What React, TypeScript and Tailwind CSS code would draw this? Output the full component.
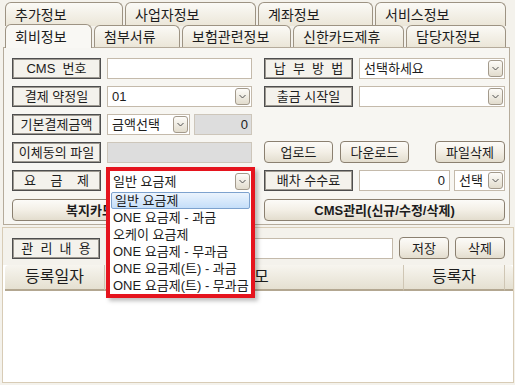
import type { ReactNode } from 'react';

const row1Tabs = [
  { label: '추가정보', w: 'w-[118px]' },
  { label: '사업자정보', w: 'w-[131px]' },
  { label: '계좌정보', w: 'w-[115px]' },
  { label: '서비스정보', w: 'w-[131px]' },
];

const row2Tabs = [
  { label: '회비정보', w: 'w-[87px]', active: true },
  { label: '첨부서류', w: 'w-[86px]' },
  { label: '보험관련정보', w: 'w-[109px]' },
  { label: '신한카드제휴', w: 'w-[111px]' },
  { label: '담당자정보', w: 'w-[100px]' },
];

const feePlans = [
  '일반 요금제',
  'ONE 요금제 - 과금',
  '오케이 요금제',
  'ONE 요금제 - 무과금',
  'ONE 요금제(트) - 과금',
  'ONE 요금제(트) - 무과금',
];

function Chevron() {
  return (
    <span className="flex h-[17px] w-[15px] shrink-0 items-center justify-center rounded-[3px] border border-[#a39a8c] bg-gradient-to-b from-[#fdfcf9] to-[#e2dccd]">
      <svg width="7" height="5" viewBox="0 0 7 5">
        <path d="M0.5 1 L3.5 4 L6.5 1" fill="none" stroke="#505050" strokeWidth="1" />
      </svg>
    </span>
  );
}

function Label({ children, w = 'w-[89px]' }: { children: ReactNode; w?: string }) {
  return (
    <div
      className={`flex h-[21px] ${w} shrink-0 items-center justify-center whitespace-pre border border-[#4e4e4e] bg-[#f4f2ec] leading-none shadow-[inset_0_0_0_1px_#9c9890]`}
    >
      {children}
    </div>
  );
}

function Select({ value, w }: { value?: string; w: string }) {
  return (
    <div className={`flex h-[21px] ${w} items-center justify-between border border-[#c4baab] bg-white pl-[4px] pr-[1px] leading-none`}>
      <span>{value}</span>
      <Chevron />
    </div>
  );
}

function Btn({ children, w, bold }: { children: ReactNode; w: string; bold?: boolean }) {
  return (
    <div
      className={`flex h-[22px] ${w} shrink-0 items-center justify-center rounded-[4px] border border-[#8b8070] bg-gradient-to-b from-[#fcfbf8] via-[#f3efe6] to-[#e3ddce] leading-none ${bold ? 'font-bold' : ''}`}
    >
      {children}
    </div>
  );
}

export default function App() {
  return (
    <div className="relative h-[385px] w-[515px] overflow-hidden bg-[#f4f2ec] font-['Liberation_Sans','Noto_Sans_CJK_KR',sans-serif] text-[13px] text-[#1c1c1c]">
      {/* Tab headers */}
      <div className="pl-[5px] pt-[2px]">
        <div className="flex h-[23px] gap-[2px]">
          {row1Tabs.map((t) => (
            <div
              key={t.label}
              className={`flex h-[24px] ${t.w} items-center rounded-t-[6px] border border-b-0 border-[#9d9383] bg-gradient-to-b from-[#fbfaf6] to-[#ebe6d8] pl-[9px] text-[14px] leading-none`}
            >
              {t.label}
            </div>
          ))}
        </div>
        <div className="relative z-10 flex h-[22px] items-end gap-[2px]">
          {row2Tabs.map((t) =>
            t.active ? (
              <div
                key={t.label}
                className={`flex h-[24px] ${t.w} items-center self-start -mt-[1px] rounded-t-[6px] border border-b-0 border-[#9d9383] bg-[#f9f8f4] pl-[9px] text-[14px] leading-none`}
              >
                {t.label}
              </div>
            ) : (
              <div
                key={t.label}
                className={`flex h-[22px] ${t.w} items-center rounded-t-[6px] border border-b-0 border-[#9d9383] bg-gradient-to-b from-[#fbfaf6] to-[#ebe6d8] pl-[9px] text-[14px] leading-none`}
              >
                {t.label}
              </div>
            )
          )}
        </div>
      </div>

      {/* 회비정보 panel */}
      <div className="ml-[3px] flex h-[178px] w-[507px] flex-col border border-[#b5ab9b] bg-[#f7f6f2] pl-[8px] pt-[10px]">
        <div className="flex h-[21px] items-center">
          <div className="flex w-[252px] gap-[6px]">
            <Label>{'CMS  번호'}</Label>
            <div className="h-[21px] w-[145px] border border-[#c4baab] bg-white" />
          </div>
          <div className="flex gap-[6px]">
            <Label>{'납  부  방  법'}</Label>
            <Select value="선택하세요" w="w-[146px]" />
          </div>
        </div>

        <div className="mt-[7px] flex h-[21px] items-center">
          <div className="flex w-[252px] gap-[6px]">
            <Label>결제 약정일</Label>
            <Select value="01" w="w-[145px]" />
          </div>
          <div className="flex gap-[6px]">
            <Label>출금 시작일</Label>
            <Select w="w-[146px]" />
          </div>
        </div>

        <div className="mt-[7px] flex h-[21px] items-center">
          <div className="flex w-[252px] gap-[4px]">
            <div className="mr-[2px]">
              <Label>기본결제금액</Label>
            </div>
            <Select value="금액선택" w="w-[83px]" />
            <div className="flex h-[21px] w-[58px] items-center justify-end border border-[#cdc6ba] bg-[#dddddd] pr-[3px] leading-none">
              0
            </div>
          </div>
        </div>

        <div className="mt-[6px] flex h-[22px] items-center">
          <div className="flex w-[252px] gap-[6px]">
            <Label>이체동의 파일</Label>
            <div className="h-[21px] w-[145px] border border-[#cdc6ba] bg-[#dddddd]" />
          </div>
          <div className="flex w-[241px] gap-[7px]">
            <Btn w="w-[69px]">업로드</Btn>
            <Btn w="w-[69px]">다운로드</Btn>
            <div className="ml-auto">
              <Btn w="w-[70px]">파일삭제</Btn>
            </div>
          </div>
        </div>

        <div className="mt-[7px] flex h-[21px] items-center">
          <div className="flex w-[252px] gap-[6px]">
            <Label>{'요    금    제'}</Label>
            <Select value="일반 요금제" w="w-[145px]" />
          </div>
          <div className="flex gap-[6px]">
            <Label>배차 수수료</Label>
            <div className="flex h-[21px] w-[91px] items-center justify-end border border-[#c4baab] bg-white pr-[4px] leading-none">
              0
            </div>
            <div className="-ml-[2px]">
              <Select value="선택" w="w-[51px]" />
            </div>
          </div>
        </div>

        <div className="mt-[8px] flex items-center">
          <div className="w-[252px]">
            <Btn w="w-[240px]" bold>
              복지카드관리(신규/수정)
            </Btn>
          </div>
          <Btn w="w-[241px]" bold>
            CMS관리(신규/수정/삭제)
          </Btn>
        </div>
      </div>

      {/* 관리 내용 section */}
      <div className="ml-[2px] mt-[2px] flex h-[156px] w-[512px] flex-col border border-[#d8ccb6]">
        <div className="flex items-center pl-[9px] pt-[9px]">
          <Label w="w-[88px]">{'관  리  내  용'}</Label>
          <div className="ml-[7px] h-[21px] w-[286px] border border-[#c4baab] bg-white" />
          <div className="ml-[6px]">
            <Btn w="w-[50px]">저장</Btn>
          </div>
          <div className="ml-[6px]">
            <Btn w="w-[50px]">삭제</Btn>
          </div>
        </div>
        <div className="mt-[6px] flex-1 bg-white">
          <div className="flex h-[26px] pl-[2px] text-[16px] leading-none">
            <div className="flex w-[100px] items-center justify-center rounded-tl-[4px] border-b-2 border-r border-[#b3a791] border-r-[#cfc6b4] bg-gradient-to-b from-[#f7f5ef] to-[#e5e0d1]">
              등록일자
            </div>
            <div className="flex w-[299px] items-center justify-center border-b-2 border-r border-[#b3a791] border-r-[#cfc6b4] bg-gradient-to-b from-[#f7f5ef] to-[#e5e0d1]">
              메모
            </div>
            <div className="flex w-[101px] items-center justify-center border-b-2 border-r border-[#b3a791] border-r-[#cfc6b4] bg-gradient-to-b from-[#f7f5ef] to-[#e5e0d1]">
              등록자
            </div>
            <div className="w-[8px] rounded-tr-[4px] border-b-2 border-[#b3a791] bg-gradient-to-b from-[#f7f5ef] to-[#e5e0d1]" />
          </div>
        </div>
      </div>

      {/* Open 요금제 dropdown, highlighted */}
      <div className="absolute left-[106px] top-[167px] z-20 flex h-[131px] w-[149px] flex-col border-4 border-[#e5141e] bg-white shadow-[3px_3px_4px_rgba(0,0,0,0.25)]">
        <div className="flex h-[21px] shrink-0 items-center justify-between pl-[3px] pr-[1px] leading-none">
          <span>일반 요금제</span>
          <Chevron />
        </div>
        <div className="flex flex-col">
          {feePlans.map((p, i) => (
            <div
              key={p}
              className={`flex h-[17px] items-center whitespace-pre pl-[3px] leading-none ${
                i === 0 ? 'mx-[1px] rounded-[2px] border border-[#7da2ce] bg-gradient-to-b from-[#ebf4fd] to-[#c5def9] pl-[2px]' : ''
              }`}
            >
              {p}
            </div>
          ))}
        </div>
      </div>
    </div>
  );
}
